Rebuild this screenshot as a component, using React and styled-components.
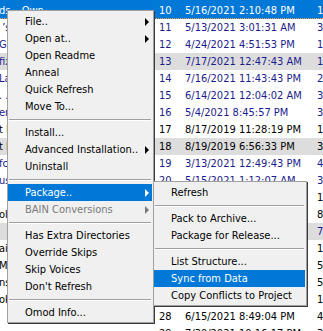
import React from 'react';
import styled, { createGlobalStyle } from 'styled-components';

const GlobalStyle = createGlobalStyle`
  html, body {
    margin: 0;
    padding: 0;
    background: #ffffff;
  }
  body {
    font-family: "DejaVu Sans Condensed", "DejaVu Sans", sans-serif;
    font-stretch: condensed;
    font-size: 11px;
  }
`;

const Page = styled.div`
  position: relative;
  width: 323px;
  height: 331px;
  overflow: hidden;
  background: #ffffff;
`;

const List = styled.div`
  display: flex;
  flex-direction: column;
`;

const toneColor = {
  sel: '#ffffff',
  navy: '#1c1c8c',
  black: '#000000',
};

const Row = styled.div`
  display: flex;
  flex: none;
  height: ${(p) => (p.$first ? '19px' : '17px')};
  box-sizing: border-box;
  padding-top: ${(p) => (p.$first ? '2px' : '0')};
  line-height: 17px;
  white-space: pre;
  color: ${(p) => toneColor[p.$tone]};
  background: ${(p) => (p.$tone === 'sel' ? '#0078d7' : p.$shaded ? '#dddddd' : 'transparent')};
  border-bottom: ${(p) => (p.$tone === 'sel' ? '1px dotted #f3a24a' : 'none')};
`;

const NameCell = styled.div`
  width: 156px;
  flex: none;
  overflow: hidden;
  text-indent: -1px;
`;

const NumCell = styled.div`
  width: 28px;
  flex: none;
  padding-left: 3px;
  box-sizing: border-box;
`;

const DateCell = styled.div`
  width: 132px;
  flex: none;
  padding-left: 1px;
  box-sizing: border-box;
`;

const SizeCell = styled.div`
  flex: 1;
  padding-left: 1px;
`;

const Menu = styled.div`
  position: absolute;
  left: ${(p) => p.$left}px;
  top: ${(p) => p.$top}px;
  width: ${(p) => p.$width}px;
  box-sizing: border-box;
  display: flex;
  flex-direction: column;
  padding: 2px 1px 1px 0;
  background: #f0f0f0;
  border: 1px solid #a0a0a0;
  box-shadow: 1px 1px 0 #3c3c3c;
  color: #000000;
`;

const Item = styled.div`
  display: flex;
  align-items: center;
  justify-content: space-between;
  height: 17px;
  line-height: 17px;
  padding: 0 3px 0 17px;
  white-space: nowrap;
  background: ${(p) => (p.$active ? '#0078d7' : 'transparent')};
  color: ${(p) => (p.$active ? '#ffffff' : p.$disabled ? '#7a7a7a' : '#000000')};
`;

const Arrow = styled.span`
  width: 0;
  height: 0;
  margin-top: 1px;
  border-top: 4px solid transparent;
  border-bottom: 4px solid transparent;
  border-left: 4px solid currentColor;
`;

const Separator = styled.div`
  height: 1px;
  margin: 4px 1px 3px 1px;
  background: #a0a0a0;
  border-bottom: 1px solid #ffffff;
`;

const rows = [
  { n: 10, date: '5/16/2021 2:10:48 PM', size: '1', name: 'ds \u2013 Own', tone: 'sel' },
  { n: 11, date: '5/13/2021 3:01:31 AM', size: '3', name: ' \u2019s Lantern', tone: 'navy' },
  { n: 12, date: '4/24/2021 4:51:53 PM', size: '1', name: 'Guards', tone: 'navy' },
  { n: 13, date: '7/17/2021 12:47:43 AM', size: '1', name: 'fixes', tone: 'navy', shaded: true },
  { n: 14, date: '7/16/2021 11:43:43 PM', size: '2', name: 'Lanterns', tone: 'navy' },
  { n: 15, date: '6/14/2021 12:04:02 AM', size: '3', name: '. . pack', tone: 'navy' },
  { n: 16, date: '5/4/2021 8:45:57 PM', size: '3', name: 'erage', tone: 'navy' },
  { n: 17, date: '8/17/2019 11:28:19 PM', size: '1', name: 't Patch', tone: 'black' },
  { n: 18, date: '8/19/2019 6:56:33 PM', size: '3', name: 't Fixes', tone: 'black', shaded: true },
  { n: 19, date: '3/13/2021 12:49:43 PM', size: '4', name: 'fcs', tone: 'navy' },
  { n: 20, date: '5/15/2021 1:12:07 AM', size: '3', name: 'usic', tone: 'navy' },
  { n: 21, date: '6/2/2021 9:14:21 PM', size: '1', name: '', tone: 'black' },
  { n: 22, date: '4/11/2021 3:22:10 PM', size: '8', name: 'ol', tone: 'black' },
  { n: 23, date: '7/2/2021 1:05:44 AM', size: '7', name: '', tone: 'navy', shaded: true },
  { n: 24, date: '5/20/2021 6:33:12 PM', size: '1', name: 'ail', tone: 'black' },
  { n: 25, date: '5/28/2021 10:41:09 PM', size: '5', name: 'Mod', tone: 'black' },
  { n: 26, date: '6/1/2021 7:17:35 PM', size: '5', name: 'ns', tone: 'black' },
  { n: 27, date: '6/9/2021 11:02:56 AM', size: '1', name: 'ok', tone: 'black' },
  { n: 28, date: '6/15/2021 8:49:04 PM', size: '4', name: '', tone: 'black' },
  { n: 29, date: '7/30/2021 10:16:17 PM', size: '3', name: '', tone: 'black' },
];

const mainMenu = [
  { label: 'File..', sub: true },
  { label: 'Open at..', sub: true },
  { label: 'Open Readme' },
  { label: 'Anneal' },
  { label: 'Quick Refresh' },
  { label: 'Move To...' },
  { sep: true },
  { label: 'Install...' },
  { label: 'Advanced Installation..', sub: true },
  { label: 'Uninstall' },
  { sep: true },
  { label: 'Package..', sub: true, active: true },
  { label: 'BAIN Conversions', sub: true, disabled: true },
  { sep: true },
  { label: 'Has Extra Directories' },
  { label: 'Override Skips' },
  { label: 'Skip Voices' },
  { label: "Don't Refresh" },
  { sep: true },
  { label: 'Omod Info...' },
];

const packageMenu = [
  { label: 'Refresh' },
  { sep: true },
  { label: 'Pack to Archive...' },
  { label: 'Package for Release...' },
  { sep: true },
  { label: 'List Structure...' },
  { label: 'Sync from Data', active: true },
  { label: 'Copy Conflicts to Project' },
];

function MenuItems({ items }) {
  return items.map((it, i) =>
    it.sep ? (
      <Separator key={i} />
    ) : (
      <Item key={i} $active={it.active} $disabled={it.disabled}>
        <span>{it.label}</span>
        {it.sub && <Arrow />}
      </Item>
    )
  );
}

export default function App() {
  return (
    <Page>
      <GlobalStyle />
      <List>
        {rows.map((r, i) => (
          <Row key={r.n} $first={i === 0} $tone={r.tone} $shaded={r.shaded}>
            <NameCell>{r.name}</NameCell>
            <NumCell>{r.n}</NumCell>
            <DateCell>{r.date}</DateCell>
            <SizeCell>{r.size}</SizeCell>
          </Row>
        ))}
      </List>
      <Menu $left={7} $top={10} $width={147}>
        <MenuItems items={mainMenu} />
      </Menu>
      <Menu $left={153} $top={181} $width={154}>
        <MenuItems items={packageMenu} />
      </Menu>
    </Page>
  );
}
